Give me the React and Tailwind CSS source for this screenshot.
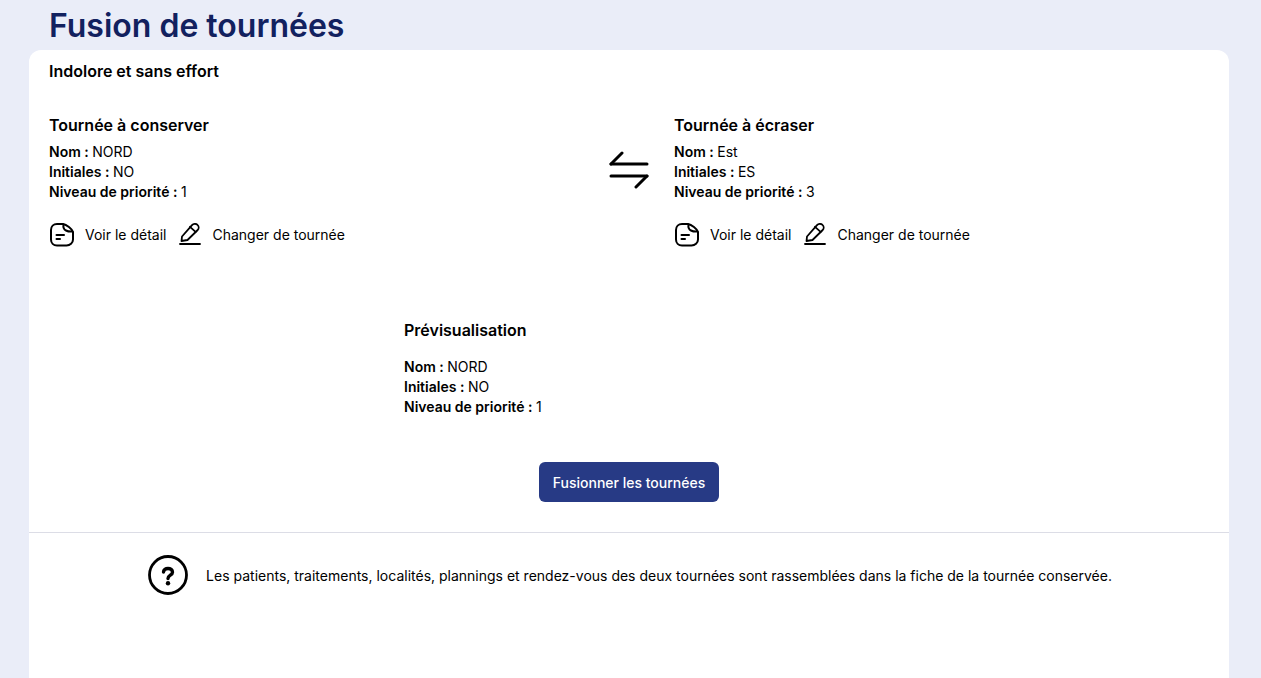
import React from 'react';

const NoteIcon = () => (
  <svg width="26" height="26" viewBox="0 0 26 26" fill="none" stroke="#000" strokeWidth="2" strokeLinecap="round" strokeLinejoin="round">
    <path d="M8 2h6c3.500 .5 9 5 10 8v7.500c0 3.500-3 6-6.500 6H8c-3.500 0-6-2.500-6-6V8c0-3.500 2.500-6 6-6z" />
    <path d="M14.500 2.500c-.5 3 .5 5 2.500 6s4 1.200 6.500 1" />
    <path d="M7.500 17h3.500" />
    <path d="M7.500 13h7.500" />
  </svg>
);

const PencilIcon = () => (
  <svg width="22" height="24" viewBox="0 0 22 24" fill="none" stroke="#000" strokeWidth="1.800" strokeLinecap="round" strokeLinejoin="round">
    <path d="M2.500 18 3 13.500 13 2.200c1.500-1.700 4-1.700 5.500-.3 1.500 1.300 1.500 3.600.2 5.100L8.500 17z" />
    <path d="M11 3.800l5.600 5" />
    <path d="M1 21h20" />
  </svg>
);

const SwapIcon = () => (
  <svg width="40" height="38" viewBox="0 0 40 38" fill="none" stroke="#000" strokeWidth="3" strokeLinecap="round" strokeLinejoin="round">
    <path d="M2 13H38" />
    <path d="M2 13 13 2" />
    <path d="M2 25H38" />
    <path d="M38 25 27 36" />
  </svg>
);

const HelpIcon = () => (
  <svg width="40" height="40" viewBox="0 0 40 40" fill="none" stroke="#000">
    <circle cx="20" cy="20" r="18.500" strokeWidth="2.800" />
    <path d="M15.500 17c0-2.500 2-3.500 4.500-3.500s4.500 1.300 4.500 3.700c0 3-4.500 3-4.500 6.300" strokeWidth="3.400" strokeLinecap="round" />
    <circle cx="20" cy="28.200" r="2.200" fill="#000" stroke="none" />
  </svg>
);

const Infos = ({ nom, initiales, priorite }) => (
  <div className="text-sm leading-5 text-black">
    <p><span className="font-semibold">Nom : </span>{nom}</p>
    <p><span className="font-semibold">Initiales : </span>{initiales}</p>
    <p><span className="font-semibold">Niveau de priorité : </span>{priorite}</p>
  </div>
);

const Tournee = ({ title, nom, initiales, priorite }) => (
  <div className="flex-1">
    <h3 className="text-base leading-6 font-semibold text-black mb-[5px]">{title}</h3>
    <Infos nom={nom} initiales={initiales} priorite={priorite} />
    <div className="flex items-center mt-[20px] text-sm h-[26px]">
      <NoteIcon />
      <span className="ml-[10px]">Voir le détail</span>
      <span className="ml-[13px] flex"><PencilIcon /></span>
      <span className="ml-[11px]">Changer de tournée</span>
    </div>
  </div>
);

export default function App() {
  return (
    <div className="h-[678px] overflow-hidden bg-[#eaedf8] pl-[29px] pr-[32px] font-['Inter',sans-serif]">
      <h1 className="h-[50px] pl-5 text-[32px] leading-[52px] font-semibold text-[#12215f]">Fusion de tournées</h1>
      <div className="h-[628px] bg-white rounded-t-xl">
        <div className="px-5 pt-[11px]">
          <h2 className="text-base leading-5 font-semibold text-black">Indolore et sans effort</h2>
          <div className="flex gap-[25px] mt-[32px]">
            <Tournee title="Tournée à conserver" nom="NORD" initiales="NO" priorite="1" />
            <div className="w-10 pt-[38px] flex items-start"><SwapIcon /></div>
            <Tournee title="Tournée à écraser" nom="Est" initiales="ES" priorite="3" />
          </div>
          <div className="mt-[70px] pl-[355px]">
            <h3 className="text-base leading-6 font-semibold text-black mb-[15px]">Prévisualisation</h3>
            <Infos nom="NORD" initiales="NO" priorite="1" />
          </div>
          <div className="flex justify-center mt-[45px]">
            <button className="h-10 w-[180px] rounded-md bg-[#273a85] pt-[2px] text-sm font-medium text-white">Fusionner les tournées</button>
          </div>
        </div>
        <div className="mt-[30px] border-t border-[#dcdde6] flex justify-center items-center gap-[18px] pt-[22px] pl-[2px]">
          <HelpIcon />
          <p className="pt-[2px] text-sm text-black">Les patients, traitements, localités, plannings et rendez-vous des deux tournées sont rassemblées dans la fiche de la tournée conservée.</p>
        </div>
      </div>
    </div>
  );
}
